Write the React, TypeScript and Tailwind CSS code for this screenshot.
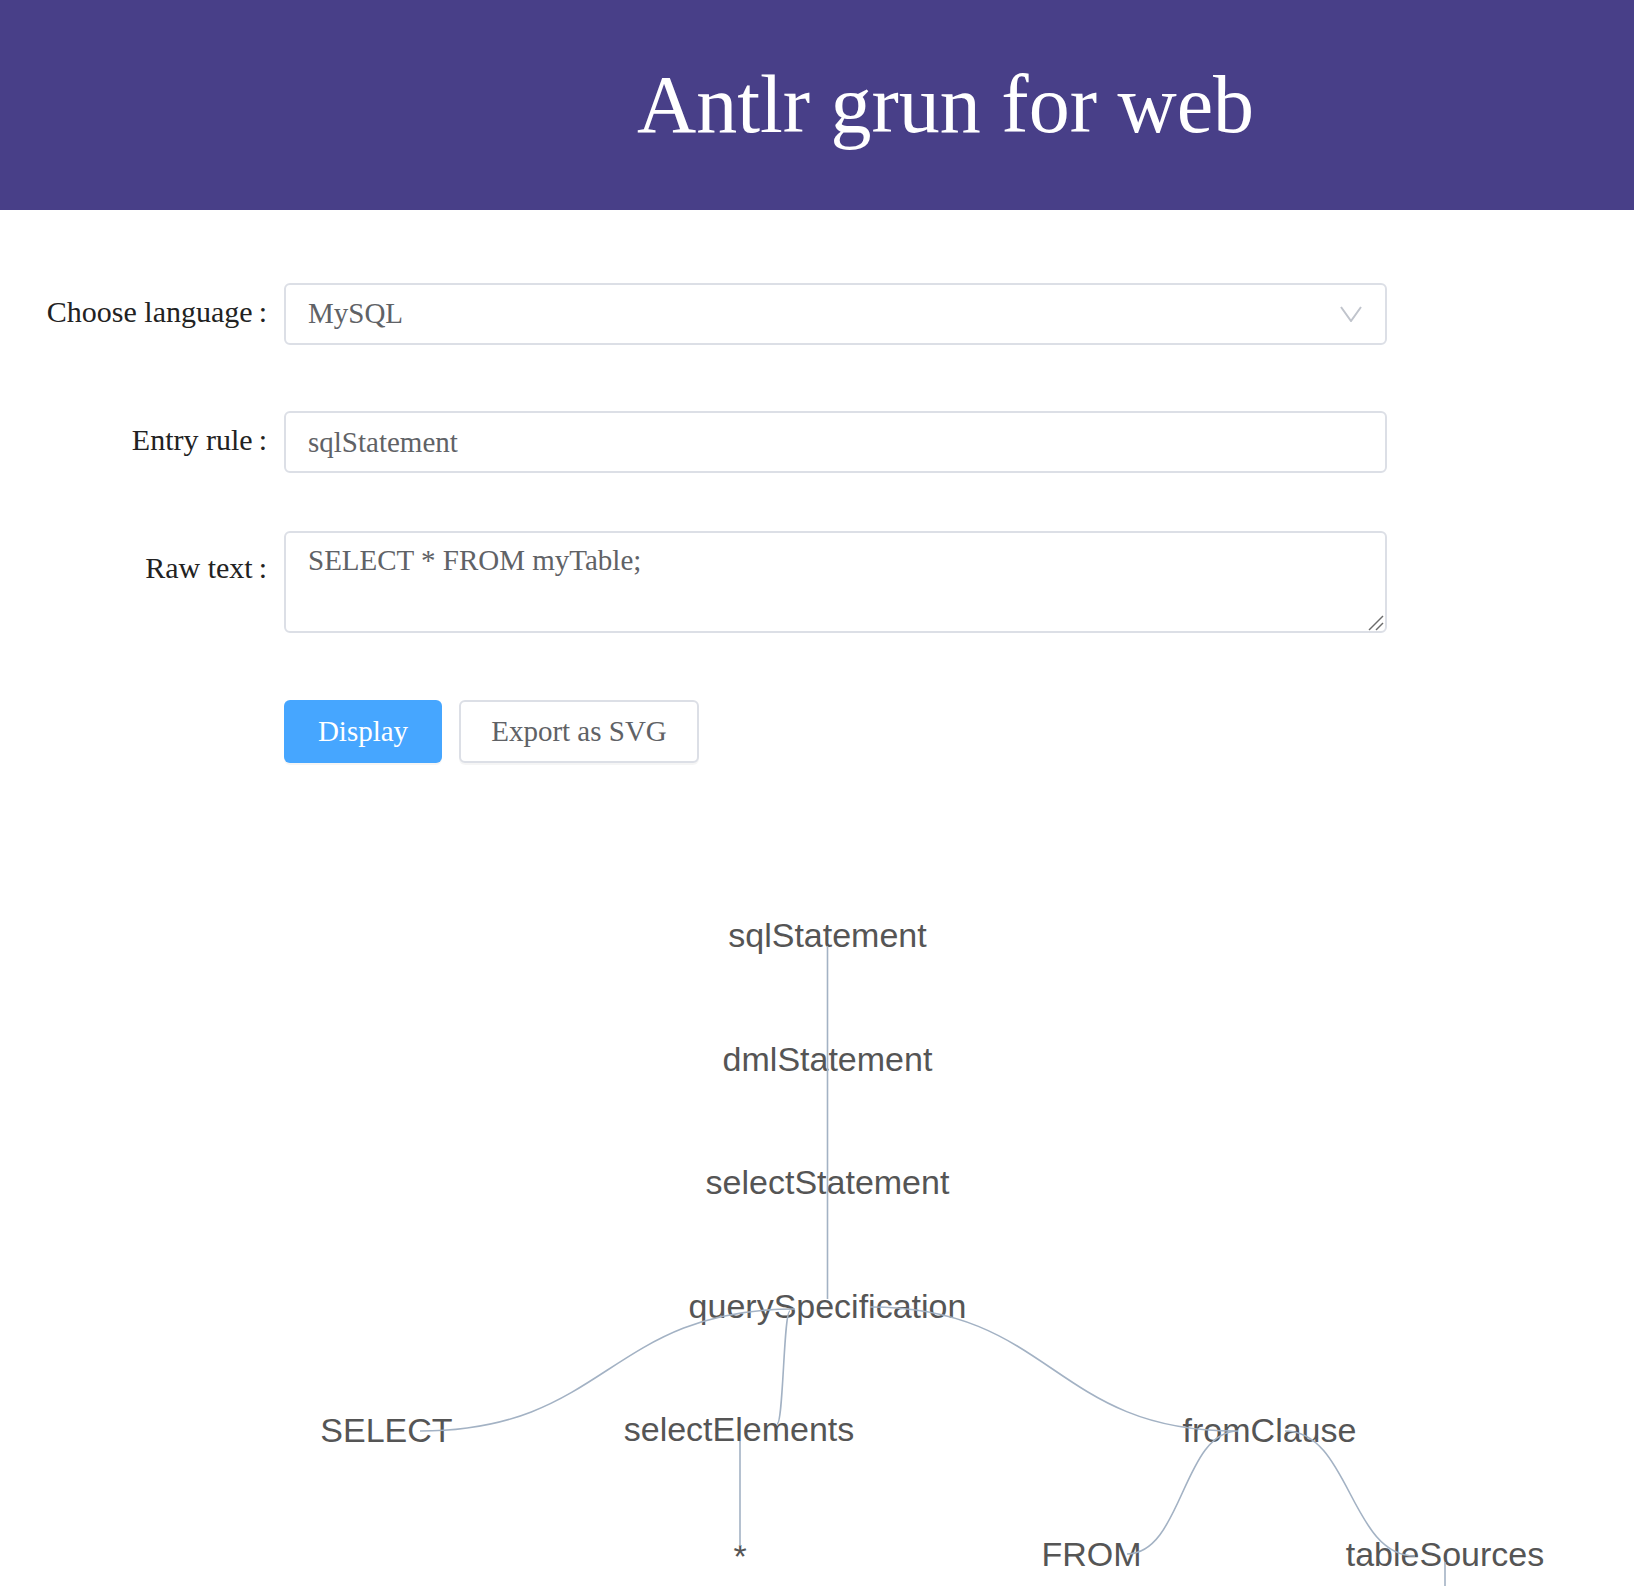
import React from "react";

const serif = "font-['Liberation_Serif','Times_New_Roman',serif]";

function Chevron() {
  return (
    <svg width="22" height="16" viewBox="0 0 22 16" fill="none" className="shrink-0">
      <path d="M1 1 L11 15 L21 1" stroke="#c0c4cc" strokeWidth="2" strokeLinejoin="miter" />
    </svg>
  );
}

type Node = { label: string; x: number; y: number };

const nodes: Node[] = [
  { label: "sqlStatement", x: 827.5, y: 168 },
  { label: "dmlStatement", x: 827.5, y: 292 },
  { label: "selectStatement", x: 827.5, y: 415 },
  { label: "querySpecification", x: 827.5, y: 539 },
  { label: "SELECT", x: 386.5, y: 663 },
  { label: "selectElements", x: 739, y: 662 },
  { label: "fromClause", x: 1269.5, y: 663 },
  { label: "*", x: 740, y: 789 },
  { label: "FROM", x: 1091.5, y: 787 },
  { label: "tableSources", x: 1445, y: 787 },
];

const links: string[] = [
  "M827.5,167 L827.5,520",
  "M795,530 C607.5,530 607.5,652 420,652",
  "M790,532 C783.5,532 783.5,645 777,645",
  "M740,662 L740,767",
  "M870,528 C1052.5,528 1052.5,652 1235,652",
  "M1238,652 C1182.5,652 1182.5,775 1127,775",
  "M1285,652 C1350,652 1350,777 1415,777",
  "M1445,783 L1445,900",
];

function Tree() {
  return (
    <svg width="1634" height="900" viewBox="0 0 1634 900" className="block font-['Liberation_Sans',Arial,sans-serif]">
      {nodes.map((n) => (
        <text key={n.label} x={n.x} y={n.y} textAnchor="middle" fontSize="34" fill="#555555">
          {n.label}
        </text>
      ))}
      {links.map((d, i) => (
        <path key={i} d={d} fill="none" stroke="#a3b2c4" strokeWidth="1.6" />
      ))}
    </svg>
  );
}

export default function App() {
  return (
    <div className={`min-h-screen bg-white ${serif}`}>
      <header className="h-[210px] bg-[#483f88] flex items-center justify-center pl-[257px]">
        <h1 className="text-white text-[82px] leading-none font-normal">Antlr grun for web</h1>
      </header>

      <div className="pt-[73px]">
        <div className="flex items-start">
          <label className="w-[267px] shrink-0 text-right text-[30px] leading-[58px] text-[#222222]">
            Choose language{"\u2009"}:
          </label>
          <div className="ml-[17px] w-[1103px] h-[62px] border-2 border-[#dcdfe6] rounded-[6px] bg-white flex items-center justify-between pl-[22px] pr-[23px] text-[29px] text-[#606266]">
            <span>MySQL</span>
            <Chevron />
          </div>
        </div>

        <div className="flex items-start mt-[66px]">
          <label className="w-[267px] shrink-0 text-right text-[30px] leading-[58px] text-[#222222]">
            Entry rule{"\u2009"}:
          </label>
          <input
            className="ml-[17px] w-[1103px] h-[62px] border-2 border-[#dcdfe6] rounded-[6px] bg-white px-[22px] text-[29px] text-[#606266] outline-none"
            defaultValue="sqlStatement"
          />
        </div>

        <div className="flex items-start mt-[58px]">
          <label className="w-[267px] shrink-0 text-right text-[30px] leading-[58px] pt-[8px] text-[#222222]">
            Raw text{"\u2009"}:
          </label>
          <div className="relative ml-[17px] w-[1103px]">
            <textarea
              className="w-[1103px] h-[102px] border-2 border-[#dcdfe6] rounded-[6px] bg-white px-[22px] pt-[6px] text-[29px] leading-[1.5] text-[#606266] outline-none resize-none block"
              defaultValue="SELECT * FROM myTable;"
            />
            <svg width="16" height="16" viewBox="0 0 16 16" className="absolute right-[3px] bottom-[2px]">
              <path d="M1 15 L15 1" stroke="#6b6b6b" strokeWidth="1.4" />
              <path d="M8 15 L15 8" stroke="#6b6b6b" strokeWidth="1.4" />
            </svg>
          </div>
        </div>

        <div className="flex mt-[67px] ml-[284px]">
          <button className="w-[158px] h-[63px] rounded-[6px] bg-[#46a6ff] text-white text-[29px] shadow-[0_2px_0_rgba(0,0,0,0.04)]">
            Display
          </button>
          <button className="ml-[17px] w-[240px] h-[63px] rounded-[6px] border-2 border-[#dcdfe6] bg-white text-[#606266] text-[29px] shadow-[0_2px_0_rgba(0,0,0,0.04)]">
            Export as SVG
          </button>
        </div>

        <div className="mt-[16px]">
          <Tree />
        </div>
      </div>
    </div>
  );
}
